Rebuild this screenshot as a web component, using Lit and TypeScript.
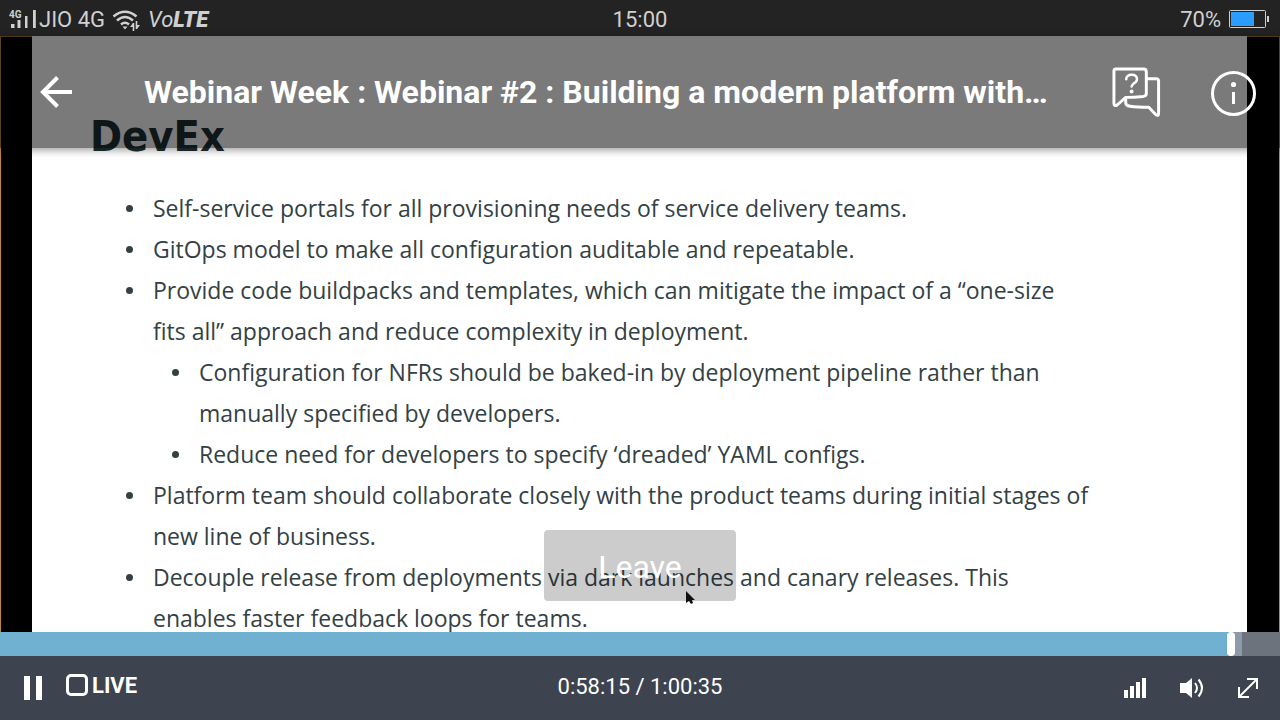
import { LitElement, html, css } from "lit";
import { customElement, state } from "lit/decorators.js";

const DURATION = 3635;
const BUFFERED = 3516;

const clock = (s: number) => {
  const two = (n: number) => String(n).padStart(2, "0");
  return `${Math.floor(s / 3600)}:${two(Math.floor(s / 60) % 60)}:${two(s % 60)}`;
};

@customElement("status-bar")
class StatusBar extends LitElement {
  static styles = css`
    :host {
      display: grid;
      grid-template-columns: 1fr auto 1fr;
      align-items: center;
      box-sizing: border-box;
      height: 36px;
      padding: 2px 11px 0;
      background: #232323;
      color: #d0d0d0;
      font-size: 22px;
      line-height: 36px;
    }
    .side { display: flex; align-items: center; }
    .end { justify-content: flex-end; gap: 8px; }
    .wifi { margin: 0 7px; }
    .volte { font-style: italic; }
    .volte b { font-weight: 900; }
    svg { display: block; flex: none; }
    .tech { font: bold 10px "Roboto", sans-serif; fill: currentColor; }
  `;
  render() {
    return html`
      <div class="side">
        <svg width="28" height="34" viewBox="11 2 28 34" overflow="visible" fill="currentColor">
          <text class="tech" x="9" y="17">4G</text>
          <path d="M11 23h3.500v4h-3.500zM17.500 19h3v8h-3zM25 15h2.500v12h-2.500zM33 9h2.800v18h-2.800z" />
        </svg>
        <span>JIO 4G</span>
        <svg class="wifi" width="29" height="34" viewBox="0 1 29 34" fill="none" stroke="currentColor" stroke-width="2.6">
          <path d="M1.500 14.500Q13 5 24.500 14.500M5 18.500Q13 11.500 21 18.500M9 22.500Q13 19 17 22.500" />
          <path d="M10.500 24.500h5l-2.500 3z" fill="currentColor" stroke="none" />
          <path d="M21.500 29v-8M24.500 19v8" stroke-width="1.600" />
          <path d="M18 25l3-4v4zM28 23l-3 4v-4z" fill="currentColor" stroke="none" />
        </svg>
        <span class="volte">Vo<b>LTE</b></span>
      </div>
      <span>15:00</span>
      <div class="side end">
        <span>70%</span>
        <svg width="40" height="20" viewBox="0 1 40 20">
          <rect x="0.500" y="1.500" width="36" height="17" rx="1" fill="none" stroke="#d0d0d0" />
          <rect x="2" y="3" width="23" height="14" fill="#2a9dff" />
          <rect x="38" y="7" width="2" height="6" fill="#d0d0d0" />
        </svg>
      </div>
    `;
  }
}

@customElement("slide-view")
class SlideView extends LitElement {
  static styles = css`
    :host {
      display: block;
      overflow: hidden;
      padding: 76px 0 0 58px;
      background: #fff;
      color: #334144;
      font-family: "Open Sans", "Noto Sans", sans-serif;
      font-size: 23px;
      line-height: 41px;
      white-space: nowrap;
    }
    h1 {
      margin: 0 0 28px;
      color: #1f2f33;
      font: bold 43px/48px "DejaVu Sans Condensed", "DejaVu Sans", sans-serif;
    }
    ul { margin: 0; padding: 0 0 0 63px; list-style: none; }
    ul ul { padding-left: 46px; }
    li::before {
      content: "";
      float: left;
      width: 7px;
      height: 7px;
      margin: 17px 0 0 -27px;
      border-radius: 50%;
      background: currentColor;
    }
  `;
  render() {
    return html`
      <h1>DevEx</h1>
      <ul>
        <li>Self-service portals for all provisioning needs of service delivery teams.</li>
        <li>GitOps model to make all configuration auditable and repeatable.</li>
        <li>Provide code buildpacks and templates, which can mitigate the impact of a “one-size<br />fits all” approach and reduce complexity in deployment.
          <ul>
            <li>Configuration for NFRs should be baked-in by deployment pipeline rather than<br />manually specified by developers.</li>
            <li>Reduce need for developers to specify ‘dreaded’ YAML configs.</li>
          </ul>
        </li>
        <li>Platform team should collaborate closely with the product teams during initial stages of<br />new line of business.</li>
        <li>Decouple release from deployments via dark launches and canary releases. This<br />enables faster feedback loops for teams.</li>
      </ul>
    `;
  }
}

@customElement("app-root")
class AppRoot extends LitElement {
  @state() private position = 3495;
  @state() private live = false;

  static styles = css`
    :host {
      display: grid;
      grid-template-rows: auto minmax(0, 1fr) auto auto;
      height: 100vh;
      overflow: hidden;
      background: #000;
      color: #fff;
      font-family: "Roboto", sans-serif;
    }
    button {
      display: block;
      margin: 0;
      padding: 0;
      border: 0;
      background: none;
      color: inherit;
      font: inherit;
      cursor: pointer;
    }
    svg { display: block; }
    .stage {
      position: relative;
      display: grid;
      padding: 0 33px 0 32px;
      background: #000;
      box-shadow: inset 1px 0 #c08a30, inset -1px 0 #c08a30, inset 0 1px #a87420;
    }
    .topbar {
      position: absolute;
      inset: 0 0 auto;
      display: flex;
      align-items: center;
      height: 112px;
      padding: 0 24px 0 40px;
      background: rgba(0, 0, 0, 0.52);
      box-shadow: 0 2px 8px rgba(0, 0, 0, 0.4);
    }
    .topbar h2 {
      flex: 1;
      min-width: 0;
      margin: 0 48px 0 72px;
      overflow: hidden;
      font-size: 32px;
      line-height: 40px;
      white-space: nowrap;
      text-overflow: ellipsis;
    }
    .actions { display: flex; align-items: center; gap: 48px; }
    .leave {
      position: absolute;
      bottom: 31px;
      left: 50%;
      width: 192px;
      height: 71px;
      padding-top: 3px;
      border-radius: 4px;
      background: rgba(0, 0, 0, 0.2);
      font-size: 32px;
      transform: translateX(-50%);
    }
    .cursor { position: absolute; right: 41px; bottom: -5px; }
    .progress { height: 24px; overflow: hidden; }
    .seek {
      appearance: none;
      display: block;
      width: calc(100% + 8px);
      height: 24px;
      margin: 0 -4px;
      background: linear-gradient(
        90deg,
        #70b0d1 var(--played),
        #8e9aa8 var(--played) var(--buffered),
        #6d737c var(--buffered)
      );
    }
    .seek::-webkit-slider-thumb {
      appearance: none;
      width: 8px;
      height: 24px;
      border-radius: 4px;
      background: #fff;
    }
    .controls {
      display: grid;
      grid-template-columns: 1fr auto 1fr;
      align-items: center;
      height: 64px;
      padding: 0 20px;
      background: #3d434f;
      font-size: 22px;
    }
    .group { display: flex; align-items: center; gap: 24px; }
    .end { justify-content: flex-end; gap: 30px; }
    .time { padding-bottom: 4px; }
    .live { display: flex; align-items: center; gap: 4px; padding-bottom: 6px; font-weight: bold; }
    .live input {
      appearance: none;
      width: 22px;
      height: 22px;
      margin: 0;
      border: 3px solid #fff;
      border-radius: 5px;
    }
    .live input:checked { background: #fff; }
  `;

  private seek(e: Event) {
    this.position = Number((e.target as HTMLInputElement).value);
  }

  render() {
    const played = (this.position / DURATION) * 100;
    const buffered = (BUFFERED / DURATION) * 100;
    return html`
      <status-bar></status-bar>
      <main class="stage">
        <slide-view></slide-view>
        <header class="topbar">
          <button aria-label="Back">
            <svg width="32" height="32" viewBox="0 0 32 32" fill="none" stroke="#fff" stroke-width="4">
              <path d="M32 16H3M17.500 1.500L3 16l14.500 14.500" />
            </svg>
          </button>
          <h2>Webinar Week : Webinar #2 : Building a modern platform with…</h2>
          <div class="actions">
            <button aria-label="Questions">
              <svg width="52" height="52" viewBox="2 0 53 53" fill="none" stroke="#fff" stroke-width="3" stroke-linejoin="round" stroke-linecap="round">
                <path d="M7 3h28q3 0 3 3v22q0 2.500-3 3-10 1-18 1l-9 8q-3 1-3-1.500V5q0-2 2-2z" />
                <path d="M38 13h10q2.500 0 2.500 2.500v33q0 3-3 1l-7-7.500q-12 0-19-1-5-.5-4.500-4.500v-3" />
                <path d="M17.500 13.500q.5-4.500 5.500-4.500 5.500 0 5.500 4.500 0 2.500-3.500 4.500-2 1.500-2 3" stroke-width="2.500" />
                <circle cx="23" cy="26" r="2" fill="#fff" stroke="none" />
              </svg>
            </button>
            <button aria-label="Information">
              <svg width="45" height="47" viewBox="0 -2 45 47" fill="none" stroke="#fff" stroke-width="3">
                <circle cx="22.500" cy="22.500" r="21" />
                <path d="M22.500 21v12" />
                <circle cx="22.500" cy="13.500" r="2.600" fill="#fff" stroke="none" />
              </svg>
            </button>
          </div>
        </header>
        <button class="leave">
          Leave
          <svg class="cursor" width="10" height="16" viewBox="0 0 10 16" aria-hidden="true">
            <path d="M1 1v12l3-2 2 3 2-1-1-3h3z" fill="#111" />
          </svg>
        </button>
      </main>
      <div class="progress">
        <input
          class="seek"
          type="range"
          aria-label="Seek"
          min="0"
          max=${DURATION}
          .value=${String(this.position)}
          style="--played:${played}%;--buffered:${buffered}%"
          @input=${this.seek}
        />
      </div>
      <footer class="controls">
        <div class="group">
          <button aria-label="Pause">
            <svg width="22" height="24" viewBox="-4 0 22 24" fill="#fff"><path d="M0 0h6v24H0zM12 0h6v24h-6z" /></svg>
          </button>
          <label class="live"><input type="checkbox" .checked=${this.live} @change=${() => (this.live = !this.live)} />LIVE</label>
        </div>
        <span class="time">${clock(this.position)} / ${clock(DURATION)}</span>
        <div class="group end">
          <button aria-label="Quality">
            <svg width="24" height="24" viewBox="1 0 24 24" fill="#fff">
              <path d="M1 14h4v8H1zM7 10h4v12H7zM13 6h4v16h-4zM19 2h4v20h-4z" />
            </svg>
          </button>
          <button aria-label="Volume">
            <svg width="28" height="24" viewBox="0 0 28 24" fill="none" stroke="#fff" stroke-width="2">
              <path d="M2 7h6l6-5v20l-6-5H2z" fill="#fff" stroke="none" />
              <path d="M17 7q4 5 0 10M20.500 3.500q7 8.500 0 17" />
            </svg>
          </button>
          <button aria-label="Full screen">
            <svg width="24" height="24" viewBox="0 0 24 24" fill="none" stroke="#fff" stroke-width="2">
              <path d="M11 3h10v10M3 11v10h10M3 21L21 3" />
            </svg>
          </button>
        </div>
      </footer>
    `;
  }
}
